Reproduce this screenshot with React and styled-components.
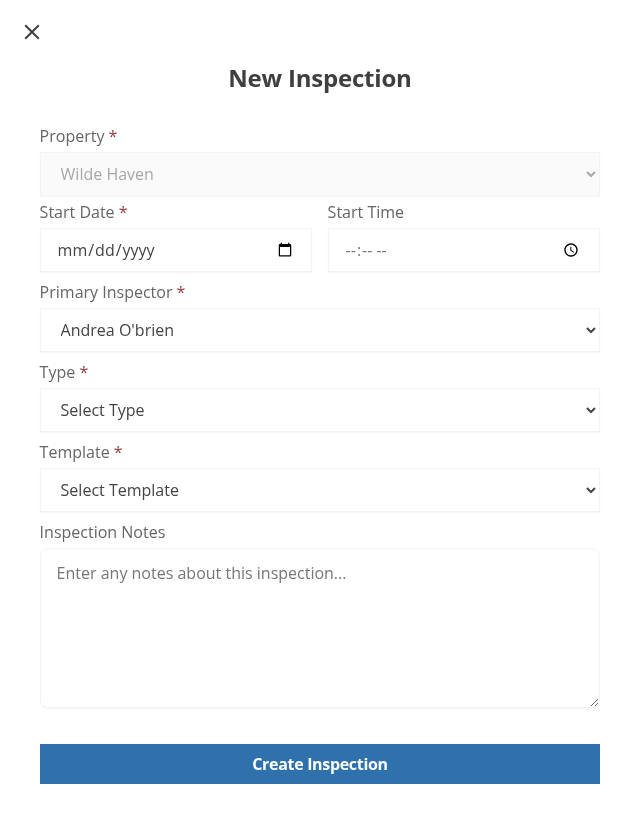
import React from 'react';
import styled, { createGlobalStyle } from 'styled-components';

const Global = createGlobalStyle`
  html, body { margin: 0; padding: 0; background: #fff; }
  body {
    font-family: "Open Sans", "Liberation Sans", sans-serif;
  }
  * { box-sizing: border-box; }
`;

const Page = styled.div`
  width: 640px;
  height: 832px;
  padding: 20px 40px 0;
  display: flex;
  flex-direction: column;
  will-change: transform;
`;

const Close = styled.button`
  width: 24px;
  height: 24px;
  margin-left: -20px;
  padding: 0;
  border: 0;
  background: none;
  color: #3f3f3f;
  display: flex;
`;

const Title = styled.h1`
  margin: 8px 0 0;
  height: 52px;
  font-size: 24px;
  line-height: 52px;
  font-weight: 700;
  letter-spacing: -0.2px;
  color: #3f3f3f;
  text-align: center;
`;

const Form = styled.form`
  display: flex;
  flex-direction: column;
  padding-top: 16px;
`;

const Field = styled.div`
  display: flex;
  flex-direction: column;
  min-width: 0;
  margin-bottom: ${p => (p.$gap ?? 4)}px;
`;

const Row = styled.div`
  display: grid;
  grid-template-columns: 272px 272px;
  gap: 16px;
`;

const Label = styled.label`
  height: 32px;
  margin-left: -0.4px;
  font-size: 16px;
  line-height: 32px;
  color: #666;
  white-space: nowrap;
`;

const Req = styled.span`
  color: #963a3a;
`;

const control = `
  width: 100%;
  height: 44px;
  border: 1px solid #f3f3f3;
  border-radius: 0;
  box-shadow: 0 1px 2px rgba(0,0,0,0.04);
  background: #fff;
  font-family: "Open Sans", "Liberation Sans", sans-serif;
  font-size: 16px;
  color: #444;
  outline: none;
`;

const Select = styled.select`
  ${control}
  padding: 0 8px 0 15.6px;
  &:disabled {
    background: #fafafa;
    color: #a8a8a8;
    opacity: 1;
  }
`;

const DateTime = styled.input`
  ${control}
  padding: 0 16.4px 0 15.6px;
  color: ${p => (p.$muted ? '#777' : '#444')};
`;

const Notes = styled.textarea`
  ${control}
  height: 160px;
  padding: 13px 15.6px;
  border-radius: 8px;
  display: block;
  resize: vertical;
  &::placeholder { color: #777; opacity: 1; }
`;

const Submit = styled.button`
  margin-top: 36px;
  width: 100%;
  height: 40px;
  border: 0;
  background: #2e71ac;
  color: #fff;
  font-family: "Open Sans", "Liberation Sans", sans-serif;
  font-size: 16px;
  font-weight: 700;
  letter-spacing: -0.32px;
`;

export default function App() {
  return (
    <Page>
      <Global />
      <Close type="button" aria-label="Close">
        <svg width="24" height="24" viewBox="0 0 24 24" fill="none" stroke="currentColor" strokeWidth="2">
          <path d="M5.2 5.2 18.8 18.8M18.8 5.2 5.2 18.8" />
        </svg>
      </Close>
      <Title>New Inspection</Title>
      <Form onSubmit={e => e.preventDefault()}>
        <Field $gap={0}>
          <Label>Property <Req>*</Req></Label>
          <Select disabled defaultValue="w"><option value="w">Wilde Haven</option></Select>
        </Field>
        <Row>
          <Field>
            <Label>Start Date <Req>*</Req></Label>
            <DateTime type="date" />
          </Field>
          <Field>
            <Label>Start Time</Label>
            <DateTime type="time" $muted />
          </Field>
        </Row>
        <Field>
          <Label>Primary Inspector <Req>*</Req></Label>
          <Select defaultValue="a"><option value="a">Andrea O'brien</option></Select>
        </Field>
        <Field>
          <Label>Type <Req>*</Req></Label>
          <Select defaultValue=""><option value="">Select Type</option></Select>
        </Field>
        <Field>
          <Label>Template <Req>*</Req></Label>
          <Select defaultValue=""><option value="">Select Template</option></Select>
        </Field>
        <Field $gap={0}>
          <Label>Inspection Notes</Label>
          <Notes placeholder="Enter any notes about this inspection..." />
        </Field>
        <Submit type="submit">Create Inspection</Submit>
      </Form>
    </Page>
  );
}
